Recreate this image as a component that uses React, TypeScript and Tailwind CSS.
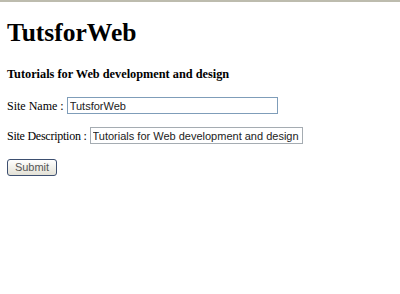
const App: React.FC = () => {
	return (
		<div className="w-[400px] h-[294px] bg-white text-black font-['Liberation_Serif',serif]">
			<div className="h-[2px] bg-[#bdbcae]"></div>
			<div className="px-[7px]">
				<h1 className="mt-[17px] text-[25.5px] leading-[28px] font-bold">TutsforWeb</h1>
				<h3 className="mt-[19px] text-[12.3px] leading-[16px] font-bold">
					Tutorials for Web development and design
				</h3>

				<div className="mt-[15px] flex items-center h-[17px] text-[12px]">
					<span>Site Name :</span>
					<input
						className="ml-[3px] w-[211px] h-[17px] border border-[#7f9db9] px-[2px] text-[11px] text-[#222] font-['Liberation_Sans',sans-serif] outline-none"
						defaultValue="TutsforWeb"
					/>
				</div>

				<div className="mt-[13px] flex items-center h-[17px] text-[12px]">
					<span className="tracking-[-0.25px]">Site Description :</span>
					<input
						className="ml-[3px] w-[213px] h-[17px] border border-[#a5acb2] px-[2px] text-[11px] text-[#222] font-['Liberation_Sans',sans-serif] outline-none"
						defaultValue="Tutorials for Web development and design"
					/>
				</div>

				<div className="mt-[15px] flex">
					<button className="w-[50px] h-[17px] rounded-[3px] border border-[#3d4f70] bg-gradient-to-b from-white to-[#e3e1d6] text-[11px] leading-[15px] text-[#555] font-['Liberation_Sans',sans-serif]">
						Submit
					</button>
				</div>
			</div>
		</div>
	);
};

export default App;
